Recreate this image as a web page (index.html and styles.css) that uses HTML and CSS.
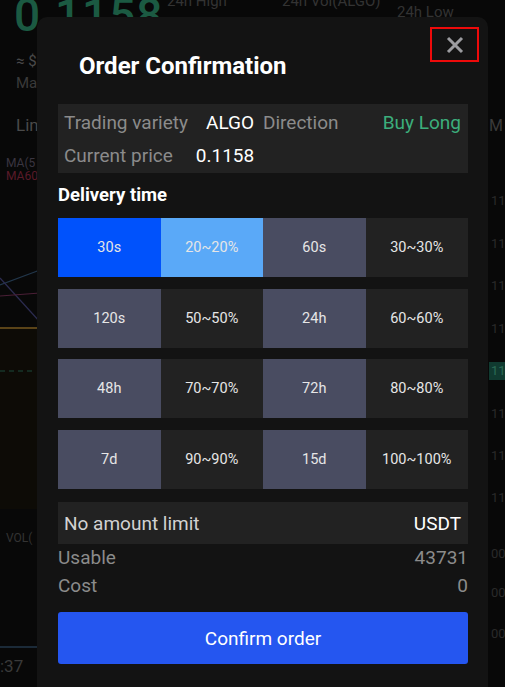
FILE: index.html
```html
<!DOCTYPE html>
<html lang="en">
<head>
<meta charset="utf-8">
<title>Order Confirmation</title>
<link rel="stylesheet" href="styles.css">
</head>
<body>
<div class="bg">
  <div class="bg-head">
    <div class="bg-price">0.1158</div>
    <div class="bg-stat s1">24h High</div>
    <div class="bg-stat s2">24h Vol(ALGO)</div>
    <div class="bg-stat s3">24h Low</div>
  </div>
  <div class="bg-usd">≈ $</div>
  <div class="bg-ma">Ma</div>
  <div class="bg-lin">Lin</div>
  <div class="bg-ma5">MA(5</div>
  <div class="bg-ma60">MA60</div>
  <div class="bg-m">M</div>
  <svg class="bg-chart" width="505" height="687" viewBox="0 0 505 687">
    <line x1="0" y1="285" x2="40" y2="270" stroke="#22364a" stroke-width="1.2"/>
    <line x1="0" y1="278" x2="40" y2="322" stroke="#2c2c50" stroke-width="1.2"/>
    <line x1="0" y1="296" x2="40" y2="293" stroke="#4a1f36" stroke-width="1.2"/>
    <rect x="0" y="329" width="40" height="180" fill="#0d0b06"/>
    <line x1="0" y1="328" x2="40" y2="328" stroke="#5a4318" stroke-width="2"/>
    <line x1="0" y1="371" x2="36" y2="371" stroke="#1c4a3a" stroke-width="1" stroke-dasharray="5 4"/>
    <line x1="0" y1="647" x2="40" y2="647" stroke="#1b2a38" stroke-width="2"/>
  </svg>
  <div class="tick" style="top:192px">11</div>
  <div class="tick" style="top:235px">11</div>
  <div class="tick" style="top:277px">11</div>
  <div class="tick" style="top:320px">11</div>
  <div class="tick tick-hl" style="top:362px">11</div>
  <div class="tick" style="top:405px">11</div>
  <div class="tick" style="top:447px">11</div>
  <div class="tick" style="top:489px">11</div>
  <div class="tick" style="top:545px">00.</div>
  <div class="tick" style="top:584px">00.</div>
  <div class="tick" style="top:625px">00.</div>
  <div class="bg-vol">VOL(</div>
  <div class="bg-time">:37</div>
</div>

<div class="modal">
  <button class="close" aria-label="Close">
    <svg width="18" height="18" viewBox="0 0 18 18"><path d="M2 2 L16 16 M16 2 L2 16" stroke="#9c9ca0" stroke-width="3" stroke-linecap="butt"/></svg>
  </button>
  <h1 class="title">Order Confirmation</h1>

  <div class="info">
    <div class="info-row">
      <div class="half">
        <span class="label">Trading variety</span>
        <span class="value">ALGO</span>
      </div>
      <div class="half half-right">
        <span class="label">Direction</span>
        <span class="buy">Buy Long</span>
      </div>
    </div>
    <div class="info-row">
      <div class="half">
        <span class="label">Current price</span>
        <span class="value v2">0.1158</span>
      </div>
    </div>
  </div>

  <h2 class="section">Delivery time</h2>

  <div class="grid">
    <div class="cell time active">30s</div>
    <div class="cell pct active-pct">20~20%</div>
    <div class="cell time">60s</div>
    <div class="cell pct">30~30%</div>
    <div class="cell time">120s</div>
    <div class="cell pct">50~50%</div>
    <div class="cell time">24h</div>
    <div class="cell pct">60~60%</div>
    <div class="cell time">48h</div>
    <div class="cell pct">70~70%</div>
    <div class="cell time">72h</div>
    <div class="cell pct">80~80%</div>
    <div class="cell time">7d</div>
    <div class="cell pct">90~90%</div>
    <div class="cell time">15d</div>
    <div class="cell pct">100~100%</div>
  </div>

  <div class="amount">
    <span class="amount-label">No amount limit</span>
    <span class="amount-unit">USDT</span>
  </div>

  <div class="kv">
    <span>Usable</span><span>43731</span>
  </div>
  <div class="kv">
    <span>Cost</span><span>0</span>
  </div>

  <button class="confirm">Confirm order</button>
</div>
</body>
</html>
```

FILE: styles.css
```css
* { box-sizing: border-box; }

html, body {
  margin: 0;
  padding: 0;
}

body {
  width: 505px;
  height: 687px;
  overflow: hidden;
  background: #080808;
  font-family: Roboto, "Noto Sans", "Liberation Sans", sans-serif;
  position: relative;
}

.bg {
  position: absolute;
  inset: 0;
  color: #3e3e3e;
}

.bg-head {
  display: flex;
  align-items: flex-start;
  height: 50px;
  position: relative;
}

.bg-price {
  position: absolute;
  left: 14px;
  top: -12px;
  font-size: 46px;
  font-weight: 500;
  color: #1b5a42;
  letter-spacing: 1px;
}

.bg-stat {
  position: absolute;
  font-size: 15px;
  color: #333333;
}
.s1 { left: 167px; top: -8px; }
.s2 { left: 282px; top: -8px; }
.s3 { left: 397px; top: 3px; }

.bg-usd, .bg-ma, .bg-lin, .bg-ma5, .bg-ma60, .bg-m, .bg-vol, .bg-time, .tick {
  position: absolute;
}

.bg-usd { left: 16px; top: 52px; font-size: 15px; color: #4a4a4a; }
.bg-ma { left: 16px; top: 74px; font-size: 15px; color: #3a3a3a; }
.bg-lin { left: 16px; top: 115px; font-size: 17px; color: #4a4a4a; }
.bg-ma5 { left: 6px; top: 157px; font-size: 12px; line-height: 12px; color: #3a3540; }
.bg-ma60 { left: 6px; top: 170px; font-size: 12px; line-height: 12px; color: #5a1a28; }
.bg-m { left: 489px; top: 116px; font-size: 16px; color: #3a3a3a; }
.bg-vol { left: 6px; top: 531px; font-size: 12px; color: #333; }
.bg-time { left: 0px; top: 656px; font-size: 17px; color: #3a3a3a; }

.bg-chart {
  position: absolute;
  left: 0;
  top: 0;
}

.tick {
  left: 489px;
  font-size: 13px;
  color: #2a2a2a;
  padding: 0 2px;
  line-height: 18px;
}
.tick-hl {
  background: #103a30;
  color: #2b6a55;
}

/* Modal */
.modal {
  position: absolute;
  left: 37px;
  top: 17px;
  width: 451px;
  height: 700px;
  background: #131313;
  border-radius: 10px;
  padding: 34px 20px 0 21px;
  color: #fff;
}

.close {
  position: absolute;
  top: 10px;
  right: 9px;
  width: 49px;
  height: 35px;
  border: 2px solid #ee0a0a;
  background: transparent;
  padding: 0;
  display: flex;
  align-items: center;
  justify-content: center;
  cursor: pointer;
}

.title {
  margin: 0 0 0 21px;
  font-size: 24px;
  line-height: 30px;
  font-weight: 700;
  color: #fff;
}

.info {
  margin-top: 23px;
  background: #222222;
  padding: 2px 7px 2px 6px;
  height: 69px;
}

.info-row {
  display: flex;
  height: 33px;
  align-items: center;
  font-size: 19px;
}

.half {
  display: flex;
  align-items: center;
  width: 199px;
}

.half-right {
  flex: 1;
  justify-content: space-between;
}

.label { color: #8b8b8b; }
.value { color: #fff; margin-left: 18px; }
.v2 { margin-left: 23px; }
.buy { color: #3cae7c; }

.section {
  margin: 10px 0 11px;
  font-size: 18.5px;
  line-height: 24px;
  font-weight: 700;
  color: #fff;
}

.grid {
  display: grid;
  grid-template-columns: repeat(4, 1fr);
  grid-auto-rows: 59px;
  row-gap: 11.7px;
}

.cell {
  display: flex;
  align-items: center;
  justify-content: center;
  font-size: 14.5px;
  color: #e6e6e6;
}

.time { background: #494c61; }
.pct { background: #222222; }
.active { background: #0052fc; }
.active-pct { background: #5aa9f8; }

.amount {
  margin-top: 13px;
  height: 42px;
  background: #222222;
  display: flex;
  align-items: center;
  justify-content: space-between;
  padding: 0 7px 0 6px;
  font-size: 19px;
}
.amount-label { color: #d2d2d2; }
.amount-unit { color: #fff; }

.kv {
  display: flex;
  justify-content: space-between;
  font-size: 19px;
  line-height: 28px;
  color: #8b8b8b;
}
.kv:first-of-type { margin-top: 4px; }

.confirm {
  display: block;
  width: 100%;
  margin-top: 12px;
  height: 52px;
  border: none;
  border-radius: 3px;
  background: #2556f0;
  color: #fff;
  font-family: Roboto, "Noto Sans", "Liberation Sans", sans-serif;
  font-size: 19px;
  cursor: pointer;
}
```
